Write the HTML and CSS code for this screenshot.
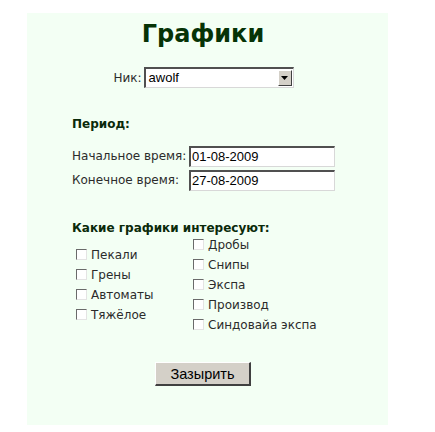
FILE: index.html
```html
<!DOCTYPE html>
<html lang="ru">
<head>
<meta charset="utf-8">
<title>Графики</title>
<link rel="stylesheet" href="styles.css">
</head>
<body>
<div class="panel">
  <h1 class="title">Графики</h1>
  <div class="nick-row">
    <span class="label">Ник:</span>
    <div class="select">
      <span class="select-value">awolf</span>
      <span class="select-btn"><svg width="7" height="4" viewBox="0 0 7 4"><path d="M0 0h7L3.5 4z" fill="#000"/></svg></span>
    </div>
  </div>

  <div class="section-title period">Период:</div>
  <div class="field-row">
    <span class="label field-label">Начальное время:</span>
    <span class="input">01-08-2009</span>
  </div>
  <div class="field-row">
    <span class="label field-label">Конечное время:</span>
    <span class="input">27-08-2009</span>
  </div>

  <div class="section-title charts">Какие графики интересуют:</div>
  <div class="checks">
    <div class="check-col check-col-left">
      <label class="check"><span class="box"></span>Пекали</label>
      <label class="check"><span class="box"></span>Грены</label>
      <label class="check"><span class="box"></span>Автоматы</label>
      <label class="check"><span class="box"></span>Тяжёлое</label>
    </div>
    <div class="check-col">
      <label class="check"><span class="box"></span>Дробы</label>
      <label class="check"><span class="box"></span>Снипы</label>
      <label class="check"><span class="box"></span>Экспа</label>
      <label class="check"><span class="box"></span>Производ</label>
      <label class="check"><span class="box"></span>Синдовайа экспа</label>
    </div>
  </div>

  <div class="actions">
    <button class="button" type="button">Зазырить</button>
  </div>
</div>
</body>
</html>
```

FILE: styles.css
```css
html, body {
  margin: 0;
  padding: 0;
  background: #ffffff;
}

body {
  padding: 13px 0 0 27px;
  font-family: "DejaVu Sans", Verdana, sans-serif;
  color: #2b2b2b;
}

.panel {
  width: 361px;
  height: 412px;
  background: #f3fff4;
  box-sizing: border-box;
  padding: 6px 0 0 45px;
}

.title {
  margin: 0 0 0 -45px;
  padding-right: 9px;
  text-align: center;
  font-size: 24px;
  font-weight: bold;
  color: #063306;
  line-height: 30px;
  height: 30px;
}

.label {
  font-size: 12px;
}

.nick-row {
  display: flex;
  align-items: center;
  justify-content: center;
  margin: 18px 0 0 -45px;
  padding-right: 8px;
  gap: 2px;
}

.select {
  display: flex;
  width: 150px;
  height: 21px;
  box-sizing: border-box;
  background: #fff;
  border-top: 2px solid #505050;
  border-left: 2px solid #505050;
  border-right: 1px solid #d8d8d8;
  border-bottom: 1px solid #d8d8d8;
}

.select-value {
  flex: 1;
  font-family: "Liberation Sans", Arial, sans-serif;
  font-size: 13px;
  line-height: 17px;
  padding-left: 3px;
  color: #000;
}

.select-btn {
  width: 14px;
  margin: 1px;
  box-sizing: border-box;
  background: #d4d0c8;
  border-top: 1px solid #fff;
  border-left: 1px solid #fff;
  border-right: 1px solid #404040;
  border-bottom: 1px solid #404040;
  display: flex;
  align-items: center;
  justify-content: center;
}

.section-title {
  font-size: 12px;
  line-height: 14px;
  font-weight: bold;
  color: #0a2a0a;
}

.period {
  margin-top: 29px;
  margin-bottom: 13px;
}

.field-row {
  display: flex;
  align-items: center;
  height: 24px;
}

.field-label {
  width: 117px;
}

.input {
  width: 146px;
  height: 21px;
  box-sizing: border-box;
  background: #fff;
  border-top: 2px solid #505050;
  border-left: 2px solid #505050;
  border-right: 1px solid #d8d8d8;
  border-bottom: 1px solid #d8d8d8;
  font-family: "Liberation Sans", Arial, sans-serif;
  font-size: 13px;
  line-height: 17px;
  padding-left: 1px;
  color: #000;
}

.charts {
  margin-top: 29px;
}

.checks {
  display: flex;
  align-items: center;
}

.check-col {
  display: flex;
  flex-direction: column;
}

.check-col-left {
  width: 117px;
}

.check {
  display: flex;
  align-items: center;
  height: 20px;
  font-size: 12px;
  padding-left: 4px;
}

.box {
  width: 11px;
  height: 11px;
  box-sizing: border-box;
  background: #fff;
  border-top: 1px solid #6a6a6a;
  border-left: 1px solid #6a6a6a;
  border-right: 1px solid #e4e4e4;
  border-bottom: 1px solid #e4e4e4;
  margin-right: 4px;
  margin-top: -2px;
}

.actions {
  margin: 27px 0 0 83px;
}

.button {
  width: 96px;
  height: 24px;
  background: #d4d0c8;
  border-top: 1px solid #ffffff;
  border-left: 1px solid #ffffff;
  border-right: 2px solid #404040;
  border-bottom: 2px solid #404040;
  font-family: "Liberation Sans", Arial, sans-serif;
  font-size: 14.5px;
  color: #000;
  padding: 0;
}
```
